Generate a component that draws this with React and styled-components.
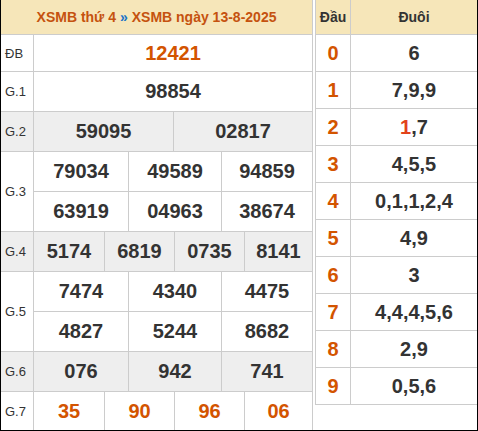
import React from "react";
import styled, { createGlobalStyle } from "styled-components";

const GlobalStyle = createGlobalStyle`
  * { box-sizing: border-box; }
  body {
    margin: 0;
    background: #fff;
    font-family: "Liberation Sans", Arial, sans-serif;
  }
`;

const Frame = styled.div`
  width: 478px;
  height: 431px;
  display: flex;
  gap: 2px;
  border: 1px solid #000;
  border-top: none;
  overflow: hidden;
`;

const Results = styled.div`
  width: 312px;
  display: flex;
  flex-direction: column;
  border-right: 1px solid #ccc;
`;

const Title = styled.div`
  height: 35px;
  display: flex;
  align-items: center;
  justify-content: center;
  background: #f6e6b9;
  border-bottom: 1px solid #ccc;
  color: #c5520f;
  font-size: 14px;
  font-weight: bold;
  gap: 4px;
`;

const Arrow = styled.span`
  color: #1a73c8;
`;

const Row = styled.div`
  display: flex;
  height: ${(p) => p.h}px;
  background: ${(p) => (p.gray ? "#eeeeee" : "#fff")};
  border-bottom: ${(p) => (p.last ? "none" : "1px solid #ccc")};
`;

const Label = styled.div`
  width: 33px;
  flex-shrink: 0;
  display: flex;
  align-items: center;
  padding-left: 4px;
  border-right: 1px solid #ccc;
  color: #333;
  font-size: 13px;
`;

const Lines = styled.div`
  flex: 1;
  display: flex;
  flex-direction: column;
`;

const Cells = styled.div`
  flex: 1;
  display: grid;
  grid-template-columns: ${(p) => p.cols};
  border-bottom: ${(p) => (p.split ? "1px solid #ccc" : "none")};
`;

const Num = styled.div`
  display: flex;
  align-items: center;
  justify-content: center;
  border-right: 1px solid #ccc;
  font-size: 20px;
  font-weight: bold;
  color: ${(p) => (p.hot ? "#d35400" : "#333")};
  &:last-child {
    border-right: none;
  }
`;

const Stats = styled.div`
  width: 162px;
  height: 405px;
  display: grid;
  grid-template-columns: 35px 1fr;
  grid-template-rows: 35px repeat(10, 37px);
  border-left: 1px solid #ccc;
`;

const Head = styled.div`
  display: flex;
  align-items: center;
  justify-content: center;
  background: #f6e6b9;
  border-bottom: 1px solid #ccc;
  border-right: ${(p) => (p.first ? "1px solid #ccc" : "none")};
  color: #333;
  font-size: 14px;
  font-weight: bold;
`;

const Cell = styled.div`
  display: flex;
  align-items: center;
  justify-content: center;
  border-bottom: 1px solid #ccc;
  border-right: ${(p) => (p.first ? "1px solid #ccc" : "none")};
  color: ${(p) => (p.first ? "#d35400" : "#333")};
  font-size: 20px;
  font-weight: bold;
`;

const Mark = styled.span`
  color: #e2421b;
`;

const COLS = {
  1: "1fr",
  2: "140px 1fr",
  3: "95px 93px 1fr",
  4: "71px 70px 70px 1fr",
};

const prizes = [
  { label: "ĐB", h: 37, lines: [["12421"]], hot: true },
  { label: "G.1", h: 40, lines: [["98854"]] },
  { label: "G.2", h: 40, gray: true, lines: [["59095", "02817"]] },
  { label: "G.3", h: 80, lines: [["79034", "49589", "94859"], ["63919", "04963", "38674"]] },
  { label: "G.4", h: 40, gray: true, lines: [["5174", "6819", "0735", "8141"]] },
  { label: "G.5", h: 80, lines: [["7474", "4340", "4475"], ["4827", "5244", "8682"]] },
  { label: "G.6", h: 40, gray: true, lines: [["076", "942", "741"]] },
  { label: "G.7", h: 38, lines: [["35", "90", "96", "06"]], hot: true, last: true },
];

const tails = [
  "6",
  "7,9,9",
  <><Mark>1</Mark>,7</>,
  "4,5,5",
  "0,1,1,2,4",
  "4,9",
  "3",
  "4,4,4,5,6",
  "2,9",
  "0,5,6",
];

export default function App() {
  return (
    <>
      <GlobalStyle />
      <Frame>
        <Results>
          <Title>
            <span>XSMB thứ 4</span>
            <Arrow>»</Arrow>
            <span>XSMB ngày 13-8-2025</span>
          </Title>
          {prizes.map((p) => (
            <Row key={p.label} h={p.h} gray={p.gray} last={p.last}>
              <Label>{p.label}</Label>
              <Lines>
                {p.lines.map((line, i) => (
                  <Cells key={i} cols={COLS[line.length]} split={i < p.lines.length - 1}>
                    {line.map((n, j) => (
                      <Num key={j} hot={p.hot}>
                        {n}
                      </Num>
                    ))}
                  </Cells>
                ))}
              </Lines>
            </Row>
          ))}
        </Results>
        <Stats>
          <Head first>Đầu</Head>
          <Head>Đuôi</Head>
          {tails.map((t, i) => (
            <React.Fragment key={i}>
              <Cell first>{i}</Cell>
              <Cell>{t}</Cell>
            </React.Fragment>
          ))}
        </Stats>
      </Frame>
    </>
  );
}
